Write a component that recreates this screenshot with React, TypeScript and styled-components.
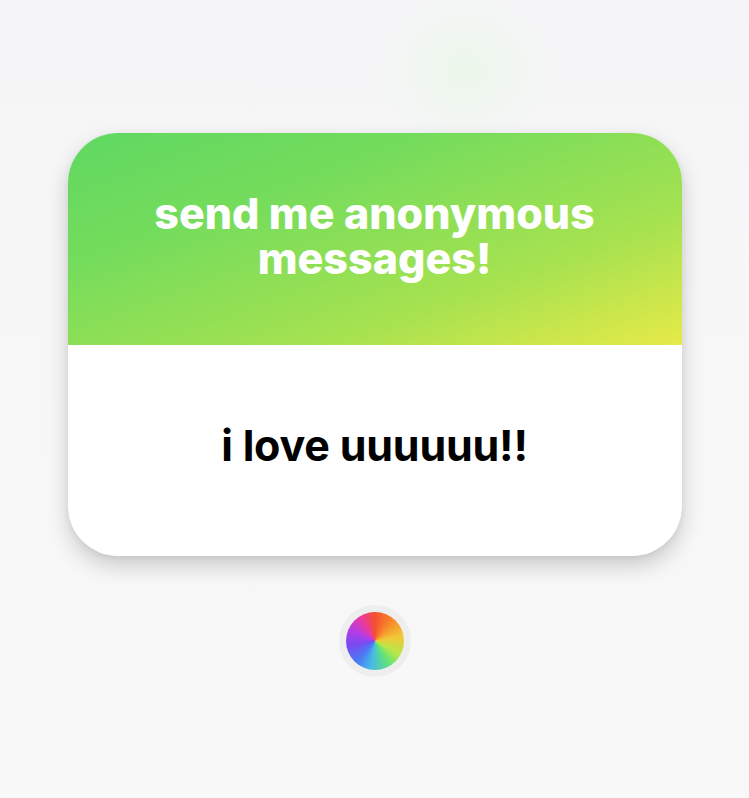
import React from "react";
import styled, { createGlobalStyle } from "styled-components";

const Global = createGlobalStyle`
  html, body { margin: 0; padding: 0; }
  body {
    background: #f8f8f8;
    font-family: Inter, "Noto Sans", sans-serif;
  }
`;

const Page = styled.div`
  width: 749px;
  height: 798px;
  display: flex;
  flex-direction: column;
  align-items: center;
  padding-top: 133px;
  box-sizing: border-box;
  background:
    radial-gradient(ellipse 90px 80px at 465px 70px, rgba(232, 247, 228, 0.7), rgba(240, 248, 238, 0) 100%),
    linear-gradient(180deg, #f5f5f7 0%, #f7f7f8 40%, #f8f8f8 100%);
  overflow: hidden;
`;

const Card = styled.div`
  width: 614px;
  height: 423px;
  border-radius: 50px;
  overflow: hidden;
  display: flex;
  flex-direction: column;
  background: #ffffff;
  box-shadow: 0 10px 22px rgba(0, 0, 0, 0.18), 0 2px 6px rgba(0, 0, 0, 0.06);
`;

const Header = styled.div`
  height: 212px;
  box-sizing: border-box;
  padding-bottom: 6px;
  display: flex;
  align-items: center;
  justify-content: center;
  background: linear-gradient(160deg, #5fd862 0%, #74dc5c 30%, #a6e250 70%, #e6ea48 100%);
`;

const Title = styled.h1`
  margin: 0;
  width: 490px;
  text-align: center;
  color: #ffffff;
  font-family: Inter, "Noto Sans", sans-serif;
  font-weight: 800;
  font-size: 43px;
  line-height: 45px;
  letter-spacing: 0;
`;

const Body = styled.div`
  flex: 1;
  display: flex;
  align-items: center;
  justify-content: center;
  padding-bottom: 10px;
`;

const Message = styled.p`
  margin: 0;
  color: #000000;
  font-family: Inter, "Noto Sans", sans-serif;
  font-weight: 700;
  font-size: 43px;
  letter-spacing: -0.2px;
  line-height: 1;
`;

const ColorButton = styled.button`
  margin-top: 49px;
  width: 72px;
  height: 72px;
  border-radius: 50%;
  border: none;
  padding: 0;
  background: #eeeeef;
  display: flex;
  align-items: center;
  justify-content: center;
`;

const Wheel = styled.span`
  display: block;
  width: 58px;
  height: 58px;
  border-radius: 50%;
  background: conic-gradient(
    from 0deg,
    #f4502f 0deg,
    #f7892a 40deg,
    #f2c837 80deg,
    #b6e84a 120deg,
    #5fe27a 150deg,
    #48b8e8 190deg,
    #4a7af4 220deg,
    #7a4af2 260deg,
    #b63ce8 295deg,
    #ec3a9a 330deg,
    #f4502f 360deg
  );
  filter: blur(0.4px);
`;

export default function App() {
  return (
    <>
      <Global />
      <Page>
        <Card>
          <Header>
            <Title>send me anonymous messages!</Title>
          </Header>
          <Body>
            <Message>i love uuuuuu!!</Message>
          </Body>
        </Card>
        <ColorButton aria-label="colour" type="button">
          <Wheel />
        </ColorButton>
      </Page>
    </>
  );
}
